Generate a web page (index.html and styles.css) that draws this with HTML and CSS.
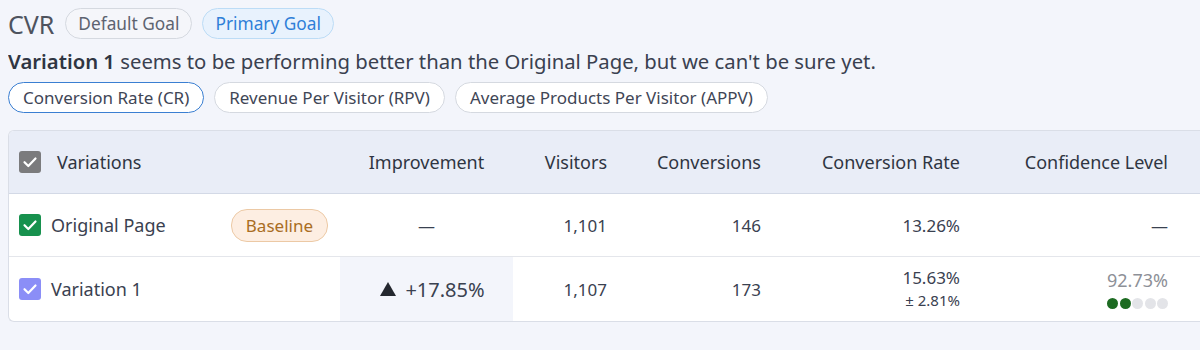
FILE: index.html
```html
<!DOCTYPE html>
<html>
<head>
<meta charset="utf-8">
<link rel="stylesheet" href="styles.css">
</head>
<body>
<div class="goal-row">
  <span class="goal-title">CVR</span>
  <span class="pill pill-default">Default Goal</span>
  <span class="pill pill-primary">Primary Goal</span>
</div>
<p class="summary"><strong>Variation 1</strong> seems to be performing better than the Original Page, but we can't be sure yet.</p>
<div class="metric-row">
  <span class="pill pill-metric active">Conversion Rate (CR)</span>
  <span class="pill pill-metric">Revenue Per Visitor (RPV)</span>
  <span class="pill pill-metric">Average Products Per Visitor (APPV)</span>
</div>
<div class="table">
  <div class="row head">
    <div class="cell name">
      <span class="cb cb-gray"><svg viewBox="0 0 22 22"><path d="M5.5 11.2l3.8 3.8 7.2-7.5" /></svg></span>
      <span>Variations</span>
    </div>
    <div class="cell center">Improvement</div>
    <div class="cell right">Visitors</div>
    <div class="cell right">Conversions</div>
    <div class="cell right">Conversion Rate</div>
    <div class="cell right">Confidence Level</div>
    <div class="cell"></div>
  </div>
  <div class="row">
    <div class="cell name">
      <span class="cb cb-green"><svg viewBox="0 0 22 22"><path d="M5.5 11.2l3.8 3.8 7.2-7.5" /></svg></span>
      <span class="vname">Original Page</span>
      <span class="baseline">Baseline</span>
    </div>
    <div class="cell center dash">—</div>
    <div class="cell right">1,101</div>
    <div class="cell right">146</div>
    <div class="cell right">13.26%</div>
    <div class="cell right dash">—</div>
    <div class="cell"></div>
  </div>
  <div class="row last">
    <div class="cell name">
      <span class="cb cb-purple"><svg viewBox="0 0 22 22"><path d="M5.5 11.2l3.8 3.8 7.2-7.5" /></svg></span>
      <span class="vname">Variation 1</span>
    </div>
    <div class="cell center improve"><span class="tri"></span>+17.85%</div>
    <div class="cell right">1,107</div>
    <div class="cell right">173</div>
    <div class="cell right stack">
      <span>15.63%</span>
      <span class="sub">± 2.81%</span>
    </div>
    <div class="cell right stack">
      <span class="conf">92.73%</span>
      <span class="dots"><i class="on"></i><i class="on"></i><i></i><i></i><i></i></span>
    </div>
    <div class="cell"></div>
  </div>
</div>
</body>
</html>
```

FILE: styles.css
```css
html {
  overflow: hidden;
}
body {
  margin: 8px 0 8px 8px;
  background: #f3f5fb;
  font-family: "Noto Sans", "Open Sans", sans-serif;
  color: #3a4150;
}
.goal-row {
  display: flex;
  align-items: center;
  gap: 10px;
  height: 31px;
}
.goal-title {
  font-size: 25px;
  color: #4e535e;
  margin-right: 1px;
}
.pill {
  display: inline-flex;
  align-items: center;
  height: 29px;
  padding: 0 12px;
  border: 1px solid #d5d9e0;
  border-radius: 16px;
  font-size: 17.3px;
  white-space: nowrap;
}
.pill-default {
  color: #5d6370;
  background: #f5f6fa;
}
.pill-primary {
  color: #2f7fd8;
  background: #e8f2fd;
  border-color: #bcdcf6;
}
.summary {
  margin: 7px 0 0;
  font-size: 20.3px;
  line-height: 30px;
  color: #3a4150;
}
.summary strong {
  font-weight: 600;
  color: #2f3542;
}
.metric-row {
  display: flex;
  gap: 10px;
  margin-top: 6px;
}
.pill-metric {
  background: #ffffff;
  color: #3f4656;
  font-size: 17px;
  padding: 0 14px;
}
.pill-metric.active {
  border-color: #3a7fd2;
}
.table {
  margin-top: 17px;
  background: #ffffff;
  border: 1px solid #dadee7;
  border-right: none;
  border-radius: 6px 0 0 6px;
  overflow: hidden;
}
.row {
  display: grid;
  grid-template-columns: 331px 173px 110px 154px 199px 208px 1fr;
  height: 62px;
  border-bottom: 1px solid #e4e6eb;
  font-size: 17px;
  color: #3a4150;
}
.row.head {
  background: #e9edf7;
  border-bottom: 1px solid #d3d9e6;
  font-size: 18px;
  color: #2f3542;
}
.row.last {
  height: 64px;
  border-bottom: none;
}
.cell {
  display: flex;
  align-items: center;
  padding: 0 16px;
  white-space: nowrap;
}
.cell.right {
  justify-content: flex-end;
}
.cell.center {
  justify-content: center;
}
.cell.name {
  padding-left: 10px;
  padding-right: 12px;
  gap: 10px;
}
.row.head .cell.name {
  gap: 16px;
}
.cb {
  width: 22px;
  height: 22px;
  border-radius: 3px;
  display: inline-flex;
  flex: none;
}
.cb svg {
  width: 22px;
  height: 22px;
}
.cb path {
  fill: none;
  stroke: #ffffff;
  stroke-width: 2.2;
  stroke-linecap: round;
  stroke-linejoin: round;
}
.cb-gray { background: #7b7b7d; }
.cb-green { background: #17914e; }
.cb-purple { background: #8b8ef7; }
.vname {
  font-size: 18px;
}
.baseline {
  margin-left: auto;
  height: 31px;
  padding: 0 14px;
  display: inline-flex;
  align-items: center;
  border: 1px solid #ecc9a5;
  background: #fdeee2;
  color: #a96d23;
  border-radius: 16px;
  font-size: 17px;
}
.dash {
  font-size: 17px;
}
.improve {
  background: #f3f5fb;
  font-size: 20px;
  gap: 9px;
  padding-left: 28px;
}
.tri {
  width: 0;
  height: 0;
  border-left: 8px solid transparent;
  border-right: 8px solid transparent;
  border-bottom: 14px solid #24282f;
}
.cell.stack {
  flex-direction: column;
  align-items: flex-end;
  justify-content: center;
  line-height: 22px;
}
.sub {
  font-size: 15px;
  line-height: 22px;
}
.conf {
  color: #8d9097;
  font-size: 18px;
  line-height: 24px;
  margin-top: -2px;
}
.dots {
  display: flex;
  gap: 1.5px;
  margin-top: 6px;
}
.dots i {
  width: 11px;
  height: 11px;
  border-radius: 50%;
  background: #e3e4e8;
}
.dots i.on {
  background: #1d6b22;
}
```
